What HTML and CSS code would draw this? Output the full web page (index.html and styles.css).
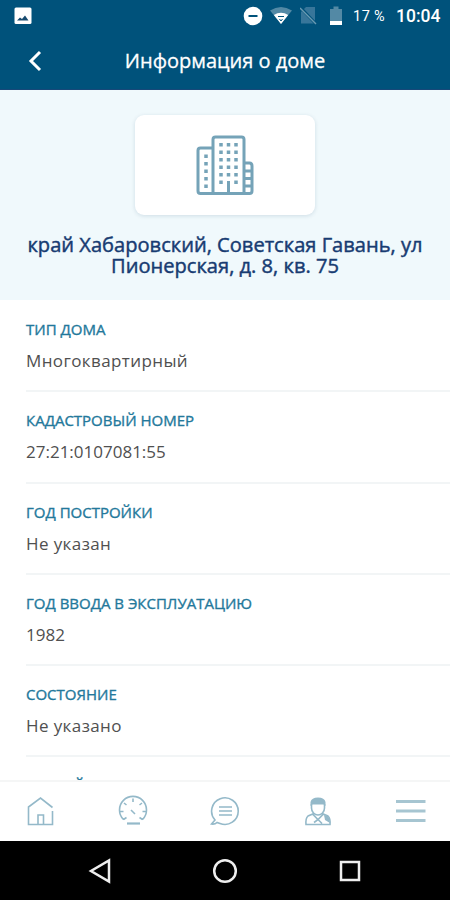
FILE: index.html
```html
<!DOCTYPE html>
<html lang="ru">
<head>
    <meta charset="UTF-8">
    <meta name="viewport" content="width=device-width, initial-scale=1.0">
    <title>Информация о доме</title>
    <link rel="stylesheet" href="styles.css">
</head>
<body>

<header>
    <div class="status-bar">
        <svg class="picture" width="18" height="18" viewBox="0 0 18 18">
            <rect x="0.5" y="0.5" width="17" height="16.5" rx="1.5" fill="#fff"/>
            <path d="M3 13.5l3-3 2 1.5 3-3.5 3.5 5z" fill="#174b70"/>
        </svg>
        <div class="status-icons">
            <svg width="20" height="20" viewBox="0 0 20 20">
                <circle cx="10" cy="10" r="9.3" fill="#fff"/>
                <path d="M5.5 10h9" stroke="#00527b" stroke-width="2"/>
            </svg>
            <svg width="22" height="20" viewBox="0 0 22 20">
                <path d="M0 4.5Q11-2.5 22 4.5L11 18z" fill="#5389a5"/>
                <path d="M3.8 9Q11 4.5 18.2 9L11 18z" fill="#fff"/>
                <path d="M8 10.5h6M9.5 13l1.5 2 1.5-2" fill="none" stroke="#00527b" stroke-width="1"/>
            </svg>
            <svg width="18" height="20" viewBox="0 0 18 20">
                <path d="M1 17.5V6l5-5h9v16.5z" fill="#38769a"/>
                <path d="M0 1l16 17" stroke="#00527b" stroke-width="3"/>
                <path d="M0 2l16 16" stroke="#6a9ab2" stroke-width="1.5"/>
            </svg>
            <svg width="14" height="20" viewBox="0 0 14 20">
                <path d="M1 18.5V3h3.5V0.5h5V3H13v15.5z" fill="#5389a5"/>
                <path d="M1 15h12v4H1z" fill="#fff"/>
            </svg>
        </div>
        <span class="battery">17&thinsp;%</span>
        <span class="time">10:04</span>
    </div>
    <div class="title-bar">
        <svg class="back" width="14" height="22" viewBox="0 0 14 22">
            <path d="M12 2L3 11l9 9" fill="none" stroke="#fff" stroke-width="3"/>
        </svg>
        <h1>Информация о доме</h1>
    </div>
</header>

<main>
    <section class="house">
        <div class="house-card">
            <svg width="58" height="62" viewBox="0 0 58 62" fill="none" stroke="#75a3b8" stroke-width="3">
                <path d="M16.5 13H4.5Q2 13 2 15.5V56Q2 58.5 4.5 58.5H53.5Q56 58.5 56 56V31Q56 28 53.5 28H48"/>
                <path d="M17 58V4.5Q17 2 19.5 2H45.5Q48 2 48 4.5V58"/>
                <path d="M32.5 46v12"/>
                <path d="M10 19.5v34" stroke-width="3.5" stroke-dasharray="3.5 4"/>
                <path d="M25 8v43M40 8v43" stroke-width="3.5" stroke-dasharray="3.5 4"/>
                <path d="M32.5 8v36" stroke-width="3.5" stroke-dasharray="3.5 4"/>
                <path d="M48 36h8M48 43.5h8M48 51h8"/>
            </svg>
        </div>
        <h2>край Хабаровский, Советская Гавань, ул Пионерская, д. 8, кв. 75</h2>
    </section>

    <dl class="details">
        <div class="row">
            <dt>ТИП ДОМА</dt>
            <dd>Многоквартирный</dd>
        </div>
        <div class="row">
            <dt>КАДАСТРОВЫЙ НОМЕР</dt>
            <dd class="number">27:21:0107081:55</dd>
        </div>
        <div class="row">
            <dt>ГОД ПОСТРОЙКИ</dt>
            <dd>Не указан</dd>
        </div>
        <div class="row">
            <dt>ГОД ВВОДА В ЭКСПЛУАТАЦИЮ</dt>
            <dd class="number">1982</dd>
        </div>
        <div class="row">
            <dt>СОСТОЯНИЕ</dt>
            <dd>Не указано</dd>
        </div>
        <div class="row">
            <dt>ОБЩИЙ ИЗНОС ЗДАНИЯ</dt>
        </div>
    </dl>
</main>

<nav class="tabs">
    <a>
        <svg width="32" height="32" viewBox="0 0 32 32">
            <path d="M28.5 13.5L16.5 4 4.5 13V30.5H28.5V17M14 30V21h5.5V30"/>
        </svg>
    </a>
    <a>
        <svg width="32" height="32" viewBox="0 0 32 32">
            <path d="M6.500 25.5A13.5 13.5 0 1 1 25.500 25.5M6.500 25.5l3-2M25.500 25.5l-3-2M2.500 17.500h4M25.500 17.500h4M16 4.500v3.500M7 9l2.500 2M25 9l-2.500 2M14 16l4 4"/>
            <path d="M10 29.500h13" stroke-width="2.2"/>
        </svg>
    </a>
    <a>
        <svg width="32" height="32" viewBox="0 0 32 32">
            <path d="M2.5 30l3.5-4A13.3 13.3 0 1 1 11 29.5L8 28.5Q6 30.5 2.5 30zM10 13h13M10 17h13M10 21h13"/>
        </svg>
    </a>
    <a>
        <svg width="32" height="32" viewBox="0 0 32 32">
            <path d="M9.5 10v4c0 4 3 7 6.5 7s6.5-3 6.5-7v-4"/>
            <path class="solid" d="M8.5 12V8q1-4.500 7.500-4.500T23.500 8v4l-2-1.500H10.500z"/>
            <path d="M12 19.5L6 22Q3.500 24 4 30.500H28Q28.5 24 26 22L20 19.5M11 20.5l5 5 5-5M12 28.500l4-3 4 4"/>
            <path class="solid" d="M22 21l4 1q2 3 2 7l-5-3z"/>
        </svg>
    </a>
    <a>
        <svg width="32" height="32" viewBox="0 0 32 32">
            <path class="menu" d="M2 7.5h29.500M2 17h29.500M2 26.5h29.500"/>
        </svg>
    </a>
</nav>

<footer class="system-nav">
    <svg width="26" height="26" viewBox="0 0 26 26"><path d="M22 2.5v21L4 13z"/></svg>
    <svg width="26" height="26" viewBox="0 0 26 26"><circle cx="13" cy="13" r="10.8"/></svg>
    <svg width="26" height="26" viewBox="0 0 26 26"><path d="M4 4h18v18H4z"/></svg>
</footer>

</body>
</html>
```
FILE: styles.css
```css
* {
    box-sizing: border-box;
}
body {
    font-family: 'Open Sans', 'Noto Sans', sans-serif;
    margin: 0;
    height: 900px;
    display: flex;
    flex-direction: column;
    overflow: hidden;
    background-color: #fff;
}
svg {
    display: block;
}
header {
    height: 90px;
    background-color: #00527b;
    color: white;
    border-bottom: 1px solid #174879;
    flex-shrink: 0;
}
.status-bar {
    height: 32px;
    padding: 0 10px 0 14px;
    display: flex;
    align-items: center;
    font-family: Roboto, sans-serif;
}
.picture {
    margin-right: auto;
}
.status-icons {
    display: flex;
    gap: 8px;
    margin-right: 10px;
}
.status-icons svg:first-child {
    margin-right: -1px;
}
.status-icons svg:last-child {
    margin-left: 3px;
}
.battery {
    width: 32px;
    font-size: 14.5px;
    letter-spacing: 0.6px;
    white-space: nowrap;
    margin-right: 11px;
}
.time {
    width: 44px;
    font-size: 17.5px;
    font-weight: 500;
    white-space: nowrap;
}
.title-bar {
    height: 57px;
    display: grid;
    grid-template-columns: 50px 1fr 50px;
    align-items: center;
}
.back {
    margin-left: 28px;
}
h1 {
    margin: 0;
    font-size: 20px;
    font-weight: 500;
    text-align: center;
    -webkit-text-stroke: 0.3px;
}
main {
    flex: 1;
    overflow: hidden;
}
.house {
    height: 210px;
    padding: 25px 20px 0;
    background-color: #f0f9fc;
}
.house-card {
    width: 180px;
    height: 100px;
    margin: 0 auto;
    padding-top: 2px;
    background-color: #fff;
    border-radius: 9px;
    box-shadow: 0 1px 4px rgba(0,60,90,0.14);
    display: flex;
    align-items: center;
    justify-content: center;
}
h2 {
    margin: 19px 0 0;
    color: #183c72;
    font-size: 20.1px;
    font-weight: 500;
    line-height: 21px;
    text-align: center;
    -webkit-text-stroke: 0.45px;
}
.details {
    margin: 1px 0 0 26px;
}
.row {
    height: 91.25px;
    padding-top: 18px;
    border-bottom: 2px solid #f2f5f6;
}
dt {
    color: #23789b;
    font-size: 15px;
    font-weight: 500;
    line-height: 20px;
    white-space: nowrap;
    -webkit-text-stroke: 0.35px;
}
dd {
    margin: 10px 0 0;
    color: #505050;
    font-size: 17px;
    line-height: 24px;
    letter-spacing: 0.4px;
}
.number {
    letter-spacing: 0;
}
.tabs {
    height: 61px;
    padding: 0 24px 3px;
    border-top: 2px solid #f5f6f6;
    display: flex;
    align-items: center;
    justify-content: space-between;
    background-color: #fff;
    flex-shrink: 0;
}
.tabs svg {
    fill: none;
    stroke: #94b9c9;
    stroke-width: 1.6;
}
.tabs .solid {
    fill: #94b9c9;
    stroke: none;
}
.tabs .menu {
    stroke-width: 3;
    stroke: #a6c5d1;
}
.system-nav {
    height: 59px;
    padding: 0 87px;
    background-color: #000;
    display: flex;
    align-items: center;
    justify-content: space-between;
    flex-shrink: 0;
}
.system-nav svg {
    fill: none;
    stroke: #eee;
    stroke-width: 2.5;
}
```
